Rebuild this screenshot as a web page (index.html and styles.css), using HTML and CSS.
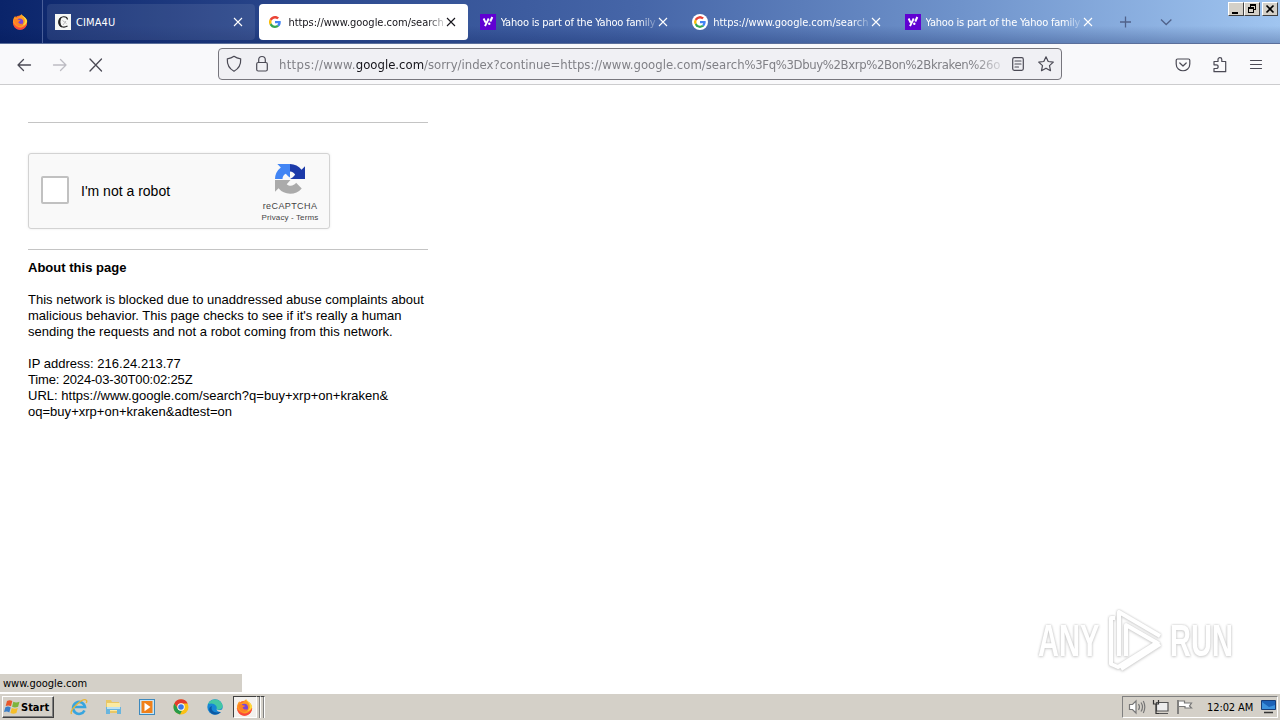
FILE: index.html
```html
<!DOCTYPE html>
<html lang="en">
<head>
  <meta charset="UTF-8">
  <title>https://www.google.com/search</title>
  <link rel="stylesheet" href="styles.css">
</head>
<body>
  <!-- shared symbols -->
  <svg class="defs" width="0" height="0">
    <symbol id="firefox" viewBox="0 0 16 16">
      <circle cx="8" cy="8.700" r="7.100" fill="#ff6a2b"/>
      <path d="M1 8C1 5 2 3 3.300 2l.6 2L6 3.500 9.500.3c.5 2 3 2.500 4.300 4.700 2 3.500.7 8-2.800 9.800C7 13 3 12 1 8z" fill="#ff9a22"/>
      <path d="M9.500.3c.2 2 3 3 3.400 6 .3 2-.8 4-2.400 5 3-.2 4.500-2 4.700-4C15 4 11.500 3 9.500.3z" fill="#ffd83b"/>
      <circle cx="7.700" cy="8" r="3.600" fill="#7a45d6"/>
      <path d="M2 5.500c2-1.300 3.300-.7 4.300.3l2.200.5c-.2 1-2 1.100-2.200 2 .9 2 3 2 4.700 1-1 3-4.500 3.500-6.500 1.500C3 9.500 2 8 2 5.500z" fill="#ff8124"/>
      <path d="M1.200 9c1.200 4 5 5.500 8.500 4.500 2.500-.7 4.400-2.500 5.300-5 .3 4-3 7.200-7 7.200-3.700 0-6.500-3-6.800-6.700z" fill="#f9453f"/>
    </symbol>
    <symbol id="google" viewBox="0 0 48 48">
      <path fill="#ea4335" d="M24 9.500c3.500 0 6.700 1.200 9.200 3.600l6.900-6.900C35.900 2.400 30.500 0 24 0 14.600 0 6.500 5.400 2.600 13.200l8 6.200C12.400 13.700 17.700 9.500 24 9.500z"/>
      <path fill="#4285f4" d="M47 24.500c0-1.600-.2-3.100-.4-4.500H24v9h12.900c-.6 3-2.300 5.500-4.800 7.200l7.700 6C44.400 38 47 31.800 47 24.500z"/>
      <path fill="#fbbc05" d="M10.500 28.600a14.500 14.500 0 0 1 0-9.200l-8-6.200a24 24 0 0 0 0 21.600z"/>
      <path fill="#34a853" d="M24 48c6.500 0 11.900-2.100 15.900-5.800l-7.700-6c-2.200 1.500-4.900 2.300-8.200 2.300-6.300 0-11.600-4.200-13.500-9.900l-8 6.200C6.500 42.600 14.600 48 24 48z"/>
    </symbol>
    <symbol id="close" viewBox="0 0 10 10"><path d="M1 1l8 8M9 1L1 9" fill="none" stroke="currentColor" stroke-width="1.100"/></symbol>
    <symbol id="yahoo" viewBox="0 0 16 16">
      <path fill="#6001d2" d="M0 0h16v16H0z"/>
      <path d="M3.600 4.500l2 4.200M8.700 4.500L5 12.200" stroke="#fff" stroke-width="1.900" fill="none"/>
      <path d="M12.300 3L10.300 7.500" stroke="#fff" stroke-width="2"/><circle cx="9.300" cy="9.700" r="1.200" fill="#fff"/>
    </symbol>
  </svg>

  <div class="tab-bar">
    <div class="firefox-view"><svg width="16" height="16"><use href="#firefox"/></svg></div>
    <div class="tabs">
      <div class="tab hovered">
        <svg class="favicon" viewBox="0 0 16 16"><path fill="#f5f7f5" d="M0 0h16v16H0z"/><path d="M12.500 5.500C12 2 5 1 4.300 7.500 3.900 12 8 14.600 12.500 12" fill="none" stroke="#222" stroke-width="1.200"/><path d="M6.500 3C2 4.500 2 12 7 13.600 5 10 5 6 6.500 3z" fill="#222"/><path d="M7.500 6.500l4 3M8 11l3-4" stroke="#bbb"/></svg>
        <span class="tab-title t-cima">CIMA4U</span>
        <svg class="tab-close"><use href="#close"/></svg>
      </div>
      <div class="tab active">
        <svg class="favicon small"><use href="#google"/></svg>
        <span class="tab-title t-url">https://www.google.com/search</span>
        <svg class="tab-close"><use href="#close"/></svg>
      </div>
      <div class="tab">
        <svg class="favicon"><use href="#yahoo"/></svg>
        <span class="tab-title">Yahoo is part of the Yahoo family</span>
        <svg class="tab-close"><use href="#close"/></svg>
      </div>
      <div class="tab">
        <svg class="favicon small disc"><use href="#google"/></svg>
        <span class="tab-title t-url">https://www.google.com/search</span>
        <svg class="tab-close"><use href="#close"/></svg>
      </div>
      <div class="tab">
        <svg class="favicon"><use href="#yahoo"/></svg>
        <span class="tab-title">Yahoo is part of the Yahoo family</span>
        <svg class="tab-close"><use href="#close"/></svg>
      </div>
    </div>
    <svg class="tab-tools" width="54" height="14" viewBox="0 0 54 14"><path d="M6.500 1.500v11M1 7h11M42 4.500l5.200 5 5.200-5" fill="none" stroke="#50628a" stroke-width="1.300"/></svg>
    <div class="window-buttons">
      <span><svg width="14" height="12"><path d="M3 9h6v2H3z"/></svg></span>
      <span><svg width="14" height="12"><path d="M5 1h6v6H9V6h1V3H6v1H5zM3 4h6v6H3zm1 2v3h4V6z" fill-rule="evenodd"/></svg></span>
      <span class="gap"><svg width="14" height="12"><path d="M3.500 2.500l7 7M10.500 2.500l-7 7" stroke="#000" stroke-width="1.700"/></svg></span>
    </div>
  </div>

  <div class="nav-bar">
    <svg class="nav-arrows" width="88" height="16" viewBox="0 0 88 16" fill="none" stroke="#4b4a55" stroke-width="1.300" stroke-linecap="round" stroke-linejoin="round">
      <path d="M14.500 8H2M7.500 2.500L2 8l5.500 5.500"/>
      <path d="M37.500 8H50M44.500 2.500L50 8l-5.500 5.500" stroke="#bdbcc3"/>
      <path d="M74 2l11.500 12M85.500 2L74 14"/>
    </svg>
    <div class="url-bar">
      <svg width="16" height="18" viewBox="0 0 16 18" class="line-icon"><path d="M8 1.300c2 1.600 4.400 2.300 6.700 2.500.3 5.500-2 10-6.700 12.500C3.300 13.800 1 9.300 1.300 3.800 3.600 3.600 6 2.900 8 1.300z"/></svg>
      <svg width="14" height="18" viewBox="0 0 14 18" class="line-icon lock"><rect x="1.700" y="7.500" width="10.600" height="8.500" rx="1.500"/><path d="M3.700 7.500V4.800C3.700.4 10.300.4 10.300 4.800v2.700"/></svg>
      <div class="address"><span class="a-pre">https://www.</span><b>google.com</b><span class="a-rest">/sorry/index?continue=https://www.google.com/search</span><span class="a-query">%3Fq%3Dbuy%2Bxrp%2Bon%2Bkraken%26o</span></div>
      <svg width="14" height="16" viewBox="0 0 14 16" class="line-icon reader"><rect x="1.700" y="1.700" width="10.600" height="12.600" rx="1.500"/><path d="M4 5h6M4 8h6M4 11h3.500"/></svg>
      <svg width="18" height="18" viewBox="0 0 18 18" class="line-icon"><path d="M9 1.800l2.200 4.700 5.100.6-3.800 3.500 1 5.100L9 13.200l-4.500 2.500 1-5.100L1.700 7.100l5.100-.6z"/></svg>
    </div>
    <div class="nav-right">
      <svg width="16" height="16" viewBox="0 0 16 16" class="line-icon"><path d="M2.500 2h11c.8 0 1.300.5 1.300 1.300V7c0 9-13.600 9-13.600 0V3.300C1.200 2.500 1.700 2 2.500 2zM4.800 6L8 9l3.200-3"/></svg>
      <svg width="16" height="18" viewBox="0 0 16 18" class="line-icon"><path d="M2 5.500h4V3.400c0-2.300 3.800-2.300 3.800 0v2.100h3.900v10.200H2v-3.200h2.200c2.600 0 2.600-3.700 0-3.700H2z"/></svg>
      <svg width="14" height="14" viewBox="0 0 14 14" class="line-icon"><path d="M1.500 2.500h11M1.500 6.500h11M1.500 10.500h11"/></svg>
    </div>
  </div>

  <div class="page">
    <div class="sorry">
      <hr>
      <div class="captcha">
        <span class="checkbox"></span>
        <span class="captcha-label">I'm not a robot</span>
        <div class="captcha-brand">
          <svg width="30" height="30" viewBox="0 0 64 64">
            <path fill="#1c3aa9" d="M64 32V5l-7.400 7.400A32 32 0 0 0 32 0v16c5 0 9 3 11 7l-5 5-6 4z"/>
            <path fill="#4285f4" d="M32 .2H5l7.400 7.300A32 32 0 0 0 0 32h16c0-5 3-9 7-11l5 5 4 3z"/>
            <path fill="#ababab" d="M0 32v27l7.500-7.400A32 32 0 0 0 57 52L45 40c-4 6-13 9-20 3l8-9H0z"/>
          </svg>
          <span class="brand-name">reCAPTCHA</span>
          <span class="brand-links"><span>Privacy</span> - <span>Terms</span></span>
        </div>
      </div>
      <hr class="second">
      <div class="about">
        <b>About this page</b>
        <p>This network is blocked due to unaddressed abuse complaints about<br>malicious behavior. This page checks to see if it's really a human<br>sending the requests and not a robot coming from this network.</p>
        <p>IP address: 216.24.213.77<br><span class="time">Time: 2024-03-30T00:02:25Z</span><br>URL: https://www.google.com/search?q=buy+xrp+on+kraken&amp;<br>oq=buy+xrp+on+kraken&amp;adtest=on</p>
      </div>
    </div>

    <div class="watermark">
      <span>ANY</span>
      <svg width="58" height="64" viewBox="0 0 58 64" fill="none" stroke="#fff" stroke-width="4" stroke-linejoin="round"><path d="M53 27L12 3v44M19 47V16l33 19M53 35L14 60"/><path d="M8 9H4v46l7 3 40-25"/></svg>
      <span>RUN</span>
    </div>
    <div class="status">www.google.com</div>
  </div>

  <div class="taskbar">
    <div class="start">
      <svg width="17" height="16" viewBox="0 0 17 16"><path fill="#e8572a" d="M3 2c2-1 3.500-1 5.300.1L7 7.300C5 6.200 3.600 6.300 1.700 7z"/><path fill="#7db43c" d="M9.300 2.700c2 1 3.800.9 6.200 0l-1.400 5c-2.300.9-4 .9-6 0z"/><path fill="#3b7fc8" d="M1.400 8.200c2-.9 3.500-.8 5.300.2l-1.400 5C3.600 12.300 2 12.300 0 13z"/><path fill="#f6be28" d="M7.800 8.900c2 1 3.800 1 6 .1l-1.400 5c-2.200.9-4 .9-6-.1z"/></svg>
      <span>Start</span>
    </div>
    <div class="quick">
      <svg width="18" height="18" viewBox="0 0 18 18"><path d="M14.500 12.500A6 6 0 1 1 15 9H5" fill="none" stroke="#37a5df" stroke-width="2.600"/><path d="M1.500 16C-1 12 13-1 16.500 2.400c.5.600.3 1.600-.3 2.600" fill="none" stroke="#e8b535" stroke-width="1.300"/></svg>
      <svg width="18" height="18" viewBox="0 0 18 18"><path fill="#e9c765" d="M2 2h5l1 2h7v11H2z"/><path fill="#fbeaa2" d="M3 5h13v8H3z"/><path fill="#69b5de" d="M2 9h15v7h-4v-4H6v4H2z"/><path fill="#bce1f3" d="M3 9h13v2H3z"/></svg>
      <svg width="18" height="18" viewBox="0 0 18 18"><path fill="#3e89bd" d="M1 1h16v16H1z"/><path fill="#c7e5f5" d="M2 2h14v14H2z"/><path fill="#f08019" d="M3.500 3h11v12h-11z"/><path fill="#fff" d="M6.500 4.800v8.400L12.500 9z"/></svg>
      <svg width="18" height="18" viewBox="0 0 18 18"><circle cx="9" cy="9" r="7.500" fill="#fbc116"/><path fill="#e33b2e" d="M2.300 5.500A7.500 7.500 0 0 1 15.700 5.500H9a3.500 3.500 0 0 0-3.200 5z"/><path fill="#269b4b" d="M2.300 5.500l3.700 5.200A3.500 3.500 0 0 0 10 12.400l-2 4A7.500 7.500 0 0 1 2.300 5.500z"/><circle cx="9" cy="9" r="3.700" fill="#fff"/><circle cx="9" cy="9" r="2.800" fill="#3b78e7"/></svg>
      <svg width="18" height="18" viewBox="0 0 18 18"><circle cx="9" cy="9" r="7.700" fill="#1687d4"/><path fill="#43c7a4" d="M2 6C5 0 14 0 16.500 7c.6 4-3 5.500-6 4.300C12 8 8 4 2 6z"/><path fill="#0c59a4" d="M6 8c-2 5 3 8 9 5.500-2 3.500-7 4-10 1.500C2 12 3 9 6 8z"/><path fill="#d5d1c8" d="M10.500 11.200c3 1.700 5 .8 6.300-.8l.2 3c-3 1.200-6 .3-6.500-2.200z"/></svg>
    </div>
    <div class="running"><svg width="17" height="17"><use href="#firefox"/></svg></div>
    <div class="stack"></div><div class="stack"></div>
    <div class="tray">
      <svg width="66" height="18" viewBox="0 0 66 18" fill="none" stroke="#777" stroke-width="1.200">
        <path d="M1.500 6.500h3L8 3v12l-3.500-3.500h-3z" fill="#fff"/><path d="M10.500 6q2 3 0 6M13 4.500q3 4.500 0 9M15.300 3q3 6 0 12"/>
        <path d="M28.500 4.500H40v8.500H28.500zM31 15.500h9" fill="#eee" stroke="#555"/><path d="M25.500 2v4h5V2M28 6v9.500h3" stroke="#333"/>
        <path d="M50 2v14" stroke="#666" stroke-width="1.500"/><path d="M51 3h5.500v2h7l-2 3 2 2H57V8.500h-6" fill="#fff"/>
      </svg>
      <span>12:02 AM</span>
      <svg width="16" height="14" viewBox="0 0 16 14"><path fill="#1d63b8" stroke="#173d78" d="M1.500.5h14v9h-14z"/><path d="M2 2l7 5 6-2v4H2z" fill="#3d92dd"/><path d="M4 12.500h9" stroke="#333" stroke-width="1.500"/></svg>
    </div>
  </div>
</body>
</html>
```

FILE: styles.css
```css
* {
  box-sizing: border-box;
}
body {
  margin: 0;
  width: 1280px;
  height: 720px;
  overflow: hidden;
  display: flex;
  flex-direction: column;
  background: #fff;
  font: 11px "DejaVu Sans Condensed", "DejaVu Sans", sans-serif;
  color: #000;
}
svg {
  flex: none;
  display: block;
}
.defs {
  position: absolute;
}

/* tab strip */
.tab-bar {
  height: 44px;
  flex: none;
  display: flex;
  align-items: center;
  background: linear-gradient(rgba(0, 20, 80, 0) 60%, rgba(0, 20, 80, 0.25)), linear-gradient(90deg, #0a246a, #2d4a8f 25%, #4666a8 50%, #6f93cb 75%, #a0c5f0);
  border-bottom: 1px solid #5b6f9b;
}
.firefox-view {
  width: 43px;
  height: 43px;
  padding: 14px 0 0 12px;
  border-right: 1px solid #4a5f99;
}
.tabs {
  display: flex;
  gap: 4px;
  margin-left: 4px;
}
.tab {
  width: 208.4px;
  height: 36px;
  border-radius: 4px;
  display: flex;
  align-items: center;
  padding: 0 12px 0 8px;
  color: #fff;
}
.tab.hovered {
  background: rgba(255, 255, 255, 0.09);
}
.tab.active {
  background: #fff;
  color: #15141a;
}
.favicon {
  width: 16px;
  height: 16px;
  margin-right: 5px;
}
.favicon.small {
  padding: 2px;
}
.favicon.disc {
  background: #fff;
  border-radius: 50%;
}
.tab-title {
  flex: 1;
  white-space: nowrap;
  line-height: 16px;
  padding-top: 2px;
  letter-spacing: -0.2px;
  mask-image: linear-gradient(90deg, #000 88%, rgba(0, 0, 0, 0.1));
}
.t-url {
  letter-spacing: -0.02px;
}
.t-cima {
  letter-spacing: 0.1px;
  mask-image: none;
}
.tab-close {
  width: 10px;
  height: 10px;
}
.tab-tools {
  margin: 1px 0 0 14px;
}
.window-buttons {
  display: flex;
  align-self: flex-start;
  margin: 2px 2px 0 auto;
}
.window-buttons span {
  width: 16px;
  height: 14px;
  background: #d4d0c8;
  border: 1px solid;
  border-color: #fff #404040 #404040 #fff;
}
.window-buttons .gap {
  margin-left: 2px;
}

/* toolbar */
.nav-bar {
  height: 41px;
  flex: none;
  display: flex;
  align-items: center;
  background: #f9f9fb;
  border-bottom: 1px solid #ccccce;
}
.nav-arrows {
  margin: 1px 0 0 16px;
}
.url-bar {
  width: 844px;
  height: 32px;
  margin-left: 114px;
  padding: 0 6px 0 7px;
  display: flex;
  align-items: center;
  background: #f0f0f4;
  border: 1px solid #77767d;
  border-radius: 4px;
}
.line-icon {
  fill: none;
  stroke: #4b4a55;
  stroke-width: 1.2;
  stroke-linejoin: round;
  stroke-linecap: round;
}
.lock {
  margin-left: 13px;
}
.address {
  width: 724px;
  margin-left: 10px;
  padding-top: 1px;
  white-space: nowrap;
  font-size: 13px;
  line-height: 20px;
  color: #808086;
  mask-image: linear-gradient(90deg, #000 96%, rgba(0, 0, 0, 0.2));
}
.address b {
  font-weight: normal;
  color: #15141a;
}
.a-pre {
  letter-spacing: 0.3px;
}
.a-query {
  letter-spacing: -0.38px;
}
.reader {
  margin: 0 12px 0 9px;
}
.nav-right {
  display: flex;
  align-items: center;
  gap: 21px;
  margin: 1px 17px 0 auto;
}

/* page */
.page {
  flex: 1;
  position: relative;
  font-family: "Liberation Sans", Arial, sans-serif;
}
.sorry {
  width: 400px;
  margin: 37px 0 0 28px;
}
hr {
  height: 1px;
  margin: 0;
  border: 0;
  background: #c4c4c4;
}
.captcha {
  width: 302px;
  height: 76px;
  margin: 30px 0 20px;
  padding-left: 12px;
  display: flex;
  align-items: center;
  background: #f9f9f9;
  border: 1px solid #d3d3d3;
  border-radius: 3px;
  box-shadow: 0 0 3px rgba(0, 0, 0, 0.08);
}
.checkbox {
  width: 28px;
  height: 28px;
  margin-bottom: 2px;
  background: #fff;
  border: 2px solid #c1c1c1;
  border-radius: 2px;
}
.captcha-label {
  margin-left: 12px;
  font-size: 14px;
}
.captcha-brand {
  width: 60px;
  margin: 5px 9px 0 auto;
  display: flex;
  flex-direction: column;
  align-items: center;
  white-space: nowrap;
  color: #444;
}
.brand-name {
  margin-top: 6px;
  font-size: 9px;
  line-height: 12px;
  letter-spacing: 0.4px;
}
.brand-links {
  font-size: 8px;
  line-height: 11px;
  letter-spacing: 0.12px;
}
.about {
  padding-top: 10px;
  font-size: 13px;
  line-height: 16px;
  letter-spacing: 0.02px;
  white-space: nowrap;
}
.about p {
  margin: 16px 0 0;
}
.time {
  letter-spacing: -0.16px;
}
.watermark {
  position: absolute;
  left: 1038px;
  top: 524px;
  display: flex;
  align-items: center;
  gap: 5px;
  font: bold 44px/64px "Liberation Sans", sans-serif;
  color: #fff;
  filter: drop-shadow(0 0 1px #c4c4c4) drop-shadow(0 1px 1px #e0e0e0);
}
.watermark span {
  width: 64px;
  transform: scaleX(0.66);
  transform-origin: left;
}
.status {
  position: absolute;
  left: 0;
  bottom: 1px;
  width: 242px;
  height: 18px;
  padding-left: 3px;
  background: #d4d0c8;
  font: 11px/20px "DejaVu Sans Condensed", "DejaVu Sans", sans-serif;
}

/* taskbar */
.taskbar {
  height: 27px;
  flex: none;
  display: flex;
  align-items: center;
  padding: 1px 2px 0;
  background: #d4d0c8;
  box-shadow: inset 0 1px #fff;
}
.start {
  width: 52px;
  height: 22px;
  padding-left: 1px;
  display: flex;
  align-items: center;
  border: 1px solid;
  border-color: #fff #404040 #404040 #fff;
  box-shadow: inset -1px -1px #808080;
  font-weight: bold;
}
.quick {
  display: flex;
  gap: 16px;
  margin-left: 16px;
}
.running {
  width: 24px;
  height: 22px;
  margin-left: 9px;
  padding: 2px 0 0 2px;
  background: #f3f1ee;
  border: 1px solid;
  border-color: #404040 #fff #fff #404040;
}
.stack {
  width: 4px;
  height: 22px;
  border-top: 1px solid #404040;
  border-right: 1px solid #fff;
  box-shadow: inset -1px 0 #808080;
}
.tray {
  width: 156px;
  height: 22px;
  margin-left: auto;
  padding: 0 1px 0 5px;
  display: flex;
  align-items: center;
  border: 1px solid;
  border-color: #808080 #fff #fff #808080;
}
.tray span {
  margin: 0 auto 0 13px;
  letter-spacing: -0.1px;
}
```
